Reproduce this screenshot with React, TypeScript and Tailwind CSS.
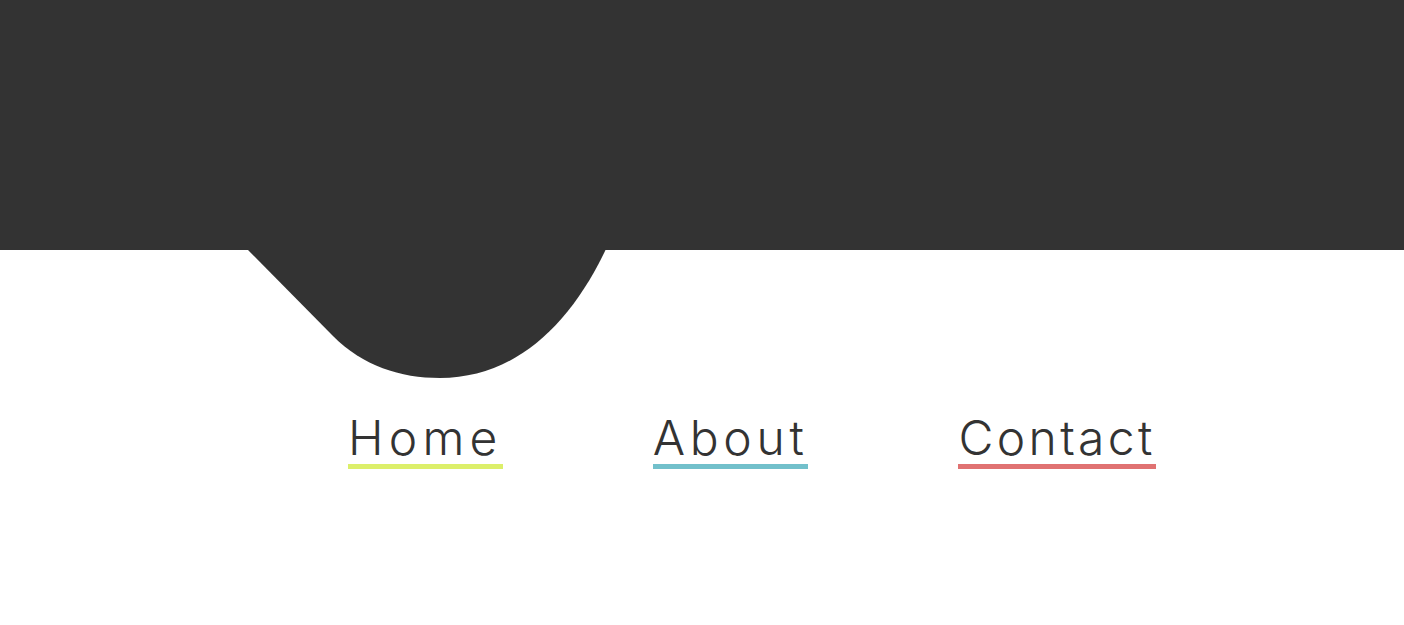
const LINKS = [
  { label: 'Home', color: 'border-[#dcef6a]', tracking: 'tracking-[5.25px]' },
  { label: 'About', color: 'border-[#72c0cb]', tracking: 'tracking-[4.7px]' },
  { label: 'Contact', color: 'border-[#e07272]', tracking: 'tracking-[3.35px]' },
]

function Blob() {
  return (
    <svg
      className="absolute left-0 top-0 pointer-events-none"
      width="700"
      height="400"
      viewBox="0 0 700 400"
    >
      <path
        d="M247 249 L333 336 C363 366 400 378 440 378 C515 378 570 325 606 249 Z"
        fill="#333333"
      />
    </svg>
  )
}

export default function App() {
  return (
    <div className="relative min-h-[625px] bg-white" style={{ fontFamily: 'Inter, "Noto Sans", sans-serif' }}>
      <header className="h-[250px] bg-[#333333]" />
      <Blob />
      <nav className="relative flex pl-[348px] pt-[164px] gap-[150px]">
        {LINKS.map((l) => (
          <a
            key={l.label}
            href="#"
            className={`inline-block text-[48px] leading-[48px] font-light text-[#333333] pb-[2px] border-b-[5px] ${l.tracking} ${l.color}`}
          >
            {l.label}
          </a>
        ))}
      </nav>
    </div>
  )
}
